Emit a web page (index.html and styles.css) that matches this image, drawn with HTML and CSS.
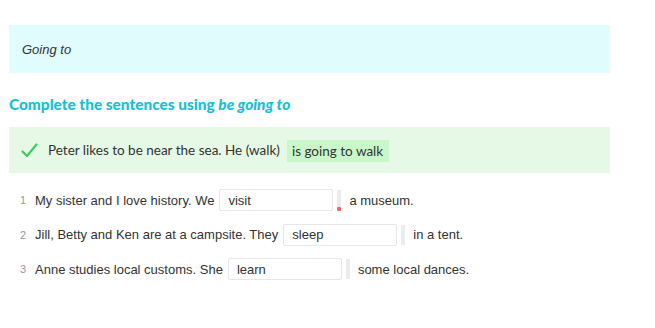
FILE: index.html
```html
<!DOCTYPE html>
<html>
<head>
<meta charset="utf-8">
<link rel="stylesheet" href="styles.css">
</head>
<body>
<div class="page">
  <div class="title-box"><span class="title">Going to</span></div>
  <h2 class="heading">Complete the sentences using <em>be going to</em></h2>
  <div class="example">
    <svg class="check" width="17" height="15" viewBox="0 0 17 15"><path d="M1.5 8.5 L6 13 L15.5 1.5" fill="none" stroke="#3ccf5e" stroke-width="2.2" stroke-linecap="round" stroke-linejoin="round"/></svg>
    <span class="ex-text">Peter likes to be near the sea. He (walk)</span>
    <span class="ex-answer">is going to walk</span>
  </div>
  <div class="items">
    <div class="item">
      <span class="num">1</span>
      <span class="txt">My sister and I love history. We</span>
      <span class="field">visit</span>
      <span class="bar"><span class="dot"></span></span>
      <span class="txt">a museum.</span>
    </div>
    <div class="item">
      <span class="num">2</span>
      <span class="txt">Jill, Betty and Ken are at a campsite. They</span>
      <span class="field">sleep</span>
      <span class="bar"></span>
      <span class="txt">in a tent.</span>
    </div>
    <div class="item">
      <span class="num">3</span>
      <span class="txt">Anne studies local customs. She</span>
      <span class="field">learn</span>
      <span class="bar"></span>
      <span class="txt">some local dances.</span>
    </div>
  </div>
</div>
</body>
</html>
```
FILE: styles.css
```css
* { box-sizing: border-box; }
body {
  margin: 0;
  background: #ffffff;
  font-family: "Liberation Sans", Arial, sans-serif;
  color: #333;
}
.page {
  padding: 25px 0 0 9px;
  width: 610px;
}
.title-box {
  background: #e0fcfd;
  height: 48px;
  display: flex;
  align-items: center;
  padding-left: 13px;
}
.title {
  font-style: italic;
  font-size: 13px;
  color: #333;
}
.heading {
  margin: 22px 0 0 0;
  font-family: "Lato", sans-serif;
  font-weight: 900;
  font-size: 15.4px;
  color: #16c0d6;
  line-height: 18px;
}
.heading em { font-style: italic; }
.example {
  margin-top: 14px;
  background: #e6f9e6;
  height: 46px;
  display: flex;
  align-items: center;
  padding-left: 12px;
}
.check { margin-right: 10px; }
.ex-text {
  font-family: "Lato", sans-serif;
  font-size: 13.5px;
  color: #333;
}
.ex-answer {
  margin-left: 7px;
  background: #c9f7c9;
  font-family: "Lato", sans-serif;
  font-size: 13.5px;
  color: #333;
  padding: 4px 6px 3px 5px;
  margin-top: 2px;
  height: 22px;
  line-height: 15px;
}
.items {
  margin-top: 16px;
  display: flex;
  flex-direction: column;
  gap: 12.5px;
  padding-left: 11px;
}
.item {
  display: flex;
  align-items: center;
  height: 22px;
  font-size: 13px;
}
.num {
  color: #999;
  font-size: 11px;
  width: 15px;
}
.field {
  margin-left: 5px;
  width: 114px;
  height: 22px;
  border: 1px solid #e6e6e6;
  border-radius: 2px;
  padding-left: 8px;
  display: flex;
  align-items: center;
  color: #333;
}
.bar {
  margin-left: 4px;
  width: 4px;
  height: 20px;
  background: #ececec;
  position: relative;
}
.dot {
  position: absolute;
  left: 0;
  bottom: -1px;
  width: 4px;
  height: 4px;
  background: #e66;
  border-radius: 1px;
}
.bar + .txt { margin-left: 8px; }
```
